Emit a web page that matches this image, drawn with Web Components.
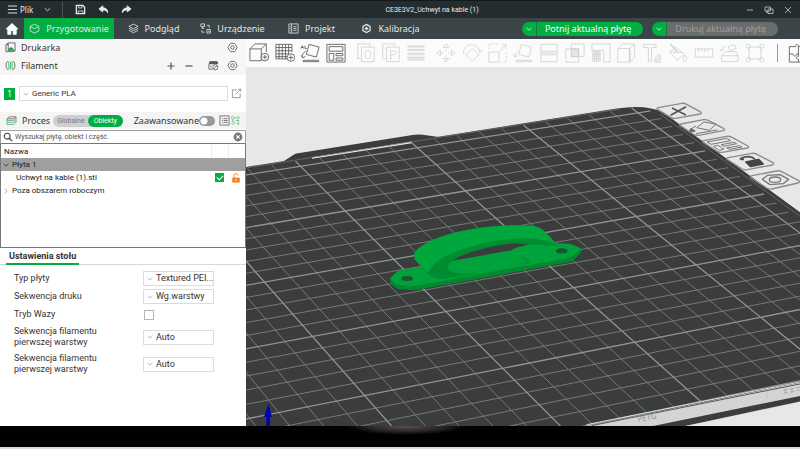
<!DOCTYPE html>
<html lang="pl">
<head>
<meta charset="utf-8">
<title>CE3E3V2_Uchwyt na kable (1)</title>
<style>
  html, body { margin: 0; height: 100%; background: #000; }
  body { font-family: "Noto Sans", "Open Sans", sans-serif; font-size: 9px; color: #333; --green: #00ae42; --compact: Roboto, "Noto Sans", sans-serif; }
</style>
</head>
<body>
<slicer-app></slicer-app>

<script>
const ICONS = {
  menu: ['0 0 12 12', '<path d="M1 2.2h10M1 6h10M1 9.8h10" stroke-width="1"/>'],
  down: ['0 0 10 10', '<path d="M2 3.6l3 2.8 3-2.8"/>'],
  right: ['0 0 10 10', '<path d="M3.6 2l2.8 3-2.8 3"/>'],
  save: ['0 0 12 12', '<path d="M1.5 1.5h7l2 2v7h-9z" stroke-width="1.4"/><path d="M4 1.5v2.8h3.6V1.5M3.4 10.5V7.6h5.2v2.9"/>'],
  undo: ['0 0 12 12', '<path d="M5.2 2L1 5.4l4.2 3.3V6.6c2.6-.2 4.3.8 5.4 3 .2-3.4-1.8-5.4-5.4-5.5z" fill="currentColor"/>'],
  redo: ['0 0 12 12', '<path d="M6.8 2L11 5.4 6.8 8.7V6.6c-2.6-.2-4.3.8-5.4 3-.2-3.4 1.8-5.4 5.4-5.5z" fill="currentColor"/>'],
  min: ['0 0 10 10', '<path d="M2 5h6"/>'],
  restore: ['0 0 10 10', '<path d="M1 2h5.5v4H1zM4 4h5v4.5H4zM2.5 6v1.5H4"/>'],
  close: ['0 0 10 10', '<path d="M2 2l6 6M8 2L2 8"/>'],
  home: ['0 0 14 14', '<path d="M7 1.5L1.2 7h1.6v5.3h3V8.6h2.400v3.700h3V7h1.600z" fill="currentColor" stroke-linejoin="round"/>'],
  cube: ['0 0 12 12', '<path d="M6 1.300l4.700 2.400v4.900L6 11 1.300 8.600V3.700zM1.500 3.900L6 6.300l4.500-2.400"/>'],
  layers: ['0 0 12 12', '<path d="M6 1.200l5 2.500-5 2.500-5-2.500zM1 5.800l5 2.500 5-2.500M1 8l5 2.600L11 8"/>'],
  device: ['0 0 12 12', '<path d="M1 1h4v3H1zM3 4v1.800M1.800 5.800h2.500M7.500 7h3.800v4H7.500zM8.500 9h2M7.500 2.500h2.500v2.500M2 8v2h3"/>'],
  project: ['0 0 12 12', '<path d="M1 1h10v10H1zM4 1.200v9.600M5.800 4h3.500M5.800 6h3.500M5.800 8h3.500M2 4h1M2 6h1M2 8h1"/>'],
  gear: ['0 0 12 12', '<path d="M4 1.500h4l1 1 2 3.500-2 3.500-1 1H4l-1-1L1 6l2-3.500z"/><circle cx="6" cy="6" r="1.900"/>'],
  calib: ['0 0 12 12', '<path d="M6 1.500l3.900 2.200v4.600L6 10.500 2.100 8.300V3.700z" stroke-width="1.300"/><path d="M6 4v4M4 6h4" stroke-width="1.600"/>'],
  printer: ['0 0 12 12', '<path d="M3.500 1h7.500v8.500H3.500zM3.500 1L1 3v7.500h7.500l2.500-1M1 3h2.500"/><path d="M3.500 8l3-2 2.500 1.500v1H3.500z" fill="#00ae42" stroke="#00ae42"/>'],
  spool: ['0 0 12 12', '<path d="M3.500 1.500c-1.500 0-2.300 2-2.300 4.500s.8 4.500 2.300 4.500M8.500 1.500c1.500 0 2.300 2 2.300 4.500s-.8 4.500-2.300 4.500"/><path d="M4.200 1.500v9M6 2v8M7.800 1.500v9" stroke="#5fc386" stroke-width="1.200"/>'],
  plus: ['0 0 10 10', '<path d="M5 1.500v7M1.500 5h7" stroke-width="1.200"/>'],
  minus: ['0 0 10 10', '<path d="M1.500 5h7" stroke-width="1.200"/>'],
  ams: ['0 0 12 12', '<path d="M2 4V2h8v2M1 4h10M1 4v6h4M3 6v2"/><path d="M2 2h8v2H2z" fill="currentColor"/><circle cx="8" cy="8" r="2.800"/><path d="M6.500 9.500l3-3"/>'],
  edit: ['0 0 12 12', '<path d="M6.500 2H1.500v8.500H10V6M5 7l5.500-5.500M8 1.300h2.700V4"/>'],
  process: ['0 0 12 12', '<path d="M3.500 2h7.500l-2.500 2.200H1z"/><path d="M1 6h7.500L11 4M1 8h7.500L11 6M1 10.300h7.500L11 8M1 4.200v6M11 2v6" stroke="#5fae80"/>'],
  list: ['0 0 12 12', '<path d="M1 1h10v10H1z"/><path d="M3 4h1M3 6h1M3 8h1M5 4h4.500M5 6h4.500M5 8h4.500"/>'],
  tune: ['0 0 12 12', '<circle cx="3" cy="3" r="1.500"/><circle cx="9" cy="3" r="1.300"/><circle cx="3.500" cy="8.500" r="1.500"/><path d="M4.500 3h3M3 4.500v2.500M6 6h4M9 6v3.500h-2M9.500 8.500v2.500"/>'],
  search: ['0 0 12 12', '<circle cx="5" cy="5" r="3.500" stroke-width="1.300"/><path d="M7.500 7.500l3.500 3.500" stroke-width="1.500"/>'],
  clear: ['0 0 12 12', '<circle cx="6" cy="6" r="5.300" fill="#777" stroke="none"/><path d="M4 4l4 4M8 4l-4 4" stroke="#fff" stroke-width="1.300"/>'],
  lock: ['0 0 10 12', '<path d="M2.500 6V3.200a2.200 2.200 0 0 1 4.400-.4" stroke-width="1.200"/><path d="M1 6h8v5H1z" fill="currentColor"/><circle cx="5" cy="8.400" r="1" fill="#fff" stroke="none"/>'],
  addCube: ['0 0 22 22', '<path d="M1 6.500h12.500v13H1zM1 6.500L6.500 1H19l-5.500 5.500M19 1v9"/><circle cx="17.500" cy="15.500" r="4.200" fill="#fafafa"/><path d="M17.500 13v5M15 15.500h5"/>'],
  addPlate: ['0 0 22 22', '<path d="M1 1.500h17.500V10M1 1.500v16h13M4.500 1.500v16M8 1.500v16M11.500 1.500v16M15 1.500v11M1 5h17.500M1 8.500h17.500M1 12h14M1 15h13"/><circle cx="17.500" cy="16" r="4.200" fill="#fafafa"/><path d="M17.500 13.500v5M15 16h5"/>'],
  orient: ['0 0 22 22', '<path d="M10 1.500l11 3-3 11-11-3zM3.500 19h17v1.500h-17zM1 6l1.500-3L4 6M5.500 3v3h2M1.500 5h2"/><path d="M7 9c-3 1-5 3-4 7M1 13.500l2 2.800 3-1.500"/>'],
  arrange: ['0 0 22 22', '<path d="M1 1.500h20v19.500H1zM3.500 4h15v5h-15zM3.500 11.500h5v7.500h-5zM11 11.500h7.500v2.500H11zM11 16.500h7.500v2.500H11z"/>'],
  copyO: ['0 0 22 22', '<path d="M15 4V1H2v16h3M6 4.500h14v16H6z"/><ellipse cx="13" cy="12.500" rx="3" ry="4.500"/>'],
  copyP: ['0 0 22 22', '<path d="M15 4V1H2v16h3M6 4.500h14v16H6zM10.500 17.500V8.500h3.500c3 0 3 4.500 0 4.500h-3.500M9 17.500h3.500"/>'],
  lines: ['0 0 22 22', '<path d="M2 3h18v1.500H2zM2 7h18v1.500H2zM2 11h18v2H2zM2 15.500h18v3.500H2z" fill="currentColor" fill-opacity=".5" stroke-width=".6"/>'],
  move: ['0 0 22 22', '<path d="M11 1l3 4H8zM11 21l3-4H8zM1 11l4-3v6zM21 11l-4-3v6z"/><path d="M11 6.500v2M11 13.500v2M6.500 11h2M13.500 11h2"/>'],
  rotate: ['0 0 22 22', '<path d="M11.500 6l7 7-7 7-7-7zM2 12C1 6 5 2 10.500 2c5 0 8.500 3 9.500 8M18 8l2 2.500 2-3"/>'],
  scale: ['0 0 22 22', '<path d="M1 10h11v11H1z"/><path d="M1 7V1h11M20 11v10h-5" stroke-dasharray="2 1.500"/><path d="M13 9l7-7M15.500 2H20v4.500"/>'],
  lay: ['0 0 22 22', '<path d="M9 1.500l11.500 3-3 11-11-3zM3.500 19h17v1.500h-17z"/><path d="M6 9c-2 1-4 3-3.500 6M.5 12.500l2 2.800 2.500-1.500"/>'],
  cut: ['0 0 22 22', '<path d="M2 9V1.500h18V9zM2 13v7.500h18V13zM0 11h22"/>'],
  bool: ['0 0 22 22', '<path d="M1 6.500h14V21H1zM7 1h14v14H7z"/><path d="M7 6.500h8V15H7z" fill="currentColor" fill-opacity=".5"/>'],
  support: ['0 0 22 22', '<path d="M1 1h20v20h-7V8H1z"/><path d="M2 9.500h8V20H2zM4 9.500V20M6 9.500V20M8 9.500V20M2 12h8M2 14.500h8M2 17h8"/>'],
  seam: ['0 0 22 22', '<path d="M2 6h13v15H2zM2 6l5-5h13.500L15 6M20.500 1v14.500L15 21"/><path d="M15 6v15" stroke-width="1.600"/>'],
  text: ['0 0 22 22', '<path d="M1.500 1.500h14v3.500H10.500v15H7V5H1.500z"/><path d="M14 21c0-5 2-8 6-8v8zM14.500 20l5-6M16 21l4-5"/>'],
  paint: ['0 0 22 22', '<path d="M8.500 4.500l9.500 8-8 6.500-8.500-9zM1.500 10l15 .5"/><path d="M2.500 1l8 8.500" stroke-width="1.600"/><path d="M19 13.500c2 3 2 6.500-.5 6.500s-2.500-3.500.5-6.500z"/>'],
  measure: ['0 0 22 22', '<path d="M1.500 6.500h19v9h-19zM5 6.500v4M8.500 6.500v3M12 6.500v4M15.500 6.500v3"/>'],
  assemble: ['0 0 22 22', '<path d="M3 14h18v6.500H3zM3 14l4-4.500h12l2 4.500M10 4l7-2.500 2 4.500-7 2.500z"/><path d="M8 3C5 4 3 5.500 3 8.500M1 6.500l2 2.500 2.500-2"/>'],
  bbox: ['0 0 22 22', '<path d="M4.500 4.500h13v13h-13z"/><circle cx="3.500" cy="3.500" r="2.300"/><circle cx="18.500" cy="3.500" r="2.300"/><circle cx="3.500" cy="18.500" r="2.300"/><circle cx="18.500" cy="18.500" r="2.300"/>'],
  puzzle: ['0 0 22 22', '<path d="M1.500 4h7c-1.500-3 4-3 3 0h8v7h-3c-3-1-3 4 0 3h3v7h-18zM1.500 12h4c0 3 4 3 4 0h2V4M11.500 12v2.500c-3 0-3 3.500 0 3.500v3"/>'],
};

const sheet = css => `<style>:host{box-sizing:border-box} *{box-sizing:border-box} button,input,select{font:inherit;color:inherit;margin:0} button{background:none;border:0;padding:0} ${css}</style>`;

function define(name, css, html, setup) {
  const template = document.createElement('template');
  template.innerHTML = sheet(css) + html;
  customElements.define(name, class extends HTMLElement {
    constructor() {
      super();
      this.attachShadow({ mode: 'open' }).append(template.content.cloneNode(true));
    }
    connectedCallback() {
      if (setup && !this.ready) { this.ready = true; setup.call(this, this.shadowRoot); }
    }
  });
}

define('ui-icon',
  `:host{display:block;flex:none;width:var(--size,12px);height:var(--size,12px)}
   svg{display:block;width:100%;height:100%;fill:none;stroke:currentColor;stroke-width:var(--line,.9)}`,
  `<svg aria-hidden="true"></svg>`,
  function (root) {
    const icon = ICONS[this.getAttribute('name')];
    if (!icon) return;
    const svg = root.querySelector('svg');
    svg.setAttribute('viewBox', icon[0]);
    svg.innerHTML = icon[1];
  });

define('title-bar',
  `:host{display:grid;grid-template-columns:1fr auto 1fr;align-items:center;height:18px;background:#252c2f;color:#e8eaea;
     border-top:1px solid #12181a;font-size:8px;line-height:16px}
   .left,.right{display:flex;align-items:center}
   .left{padding-left:7px}
   .file{display:flex;align-items:center;gap:2px}
   .down{margin-left:10px;--size:9px}
   i{width:1px;height:16px;background:#4b5356;margin:0 12px 0 10px}
   .tools{display:flex;gap:12px;--size:11px}
   .right{justify-content:flex-end;gap:9px;padding-right:7px;--size:10px;color:#b5babb}
   h1{font:inherit;font-family:var(--compact);font-size:7px;margin:0;padding-left:64px}`,
  `<div class="left"><button class="file"><ui-icon name="menu" style="--size:11px"></ui-icon>Plik</button>
     <button class="down" aria-label="Rozwiń"><ui-icon name="down"></ui-icon></button><i></i>
     <div class="tools"><button aria-label="Zapisz"><ui-icon name="save"></ui-icon></button>
     <button aria-label="Cofnij"><ui-icon name="undo"></ui-icon></button>
     <button aria-label="Ponów"><ui-icon name="redo"></ui-icon></button></div></div>
   <h1>CE3E3V2_Uchwyt na kable (1)</h1>
   <div class="right"><button aria-label="Minimalizuj"><ui-icon name="min"></ui-icon></button>
     <button aria-label="Przywróć"><ui-icon name="restore"></ui-icon></button>
     <button aria-label="Zamknij"><ui-icon name="close"></ui-icon></button></div>`);

define('nav-tab',
  `:host{display:block;width:79px}
   :host([active]){width:90px;background:var(--green)}
   button{display:flex;align-items:center;justify-content:center;gap:6px;width:100%;height:100%;white-space:nowrap}
   ui-icon{--size:11px}`,
  `<button><slot></slot></button>`,
  function (root) {
    const icon = document.createElement('ui-icon');
    icon.setAttribute('name', this.getAttribute('icon'));
    root.querySelector('button').prepend(icon);
  });

define('split-button',
  `:host{display:flex;height:14px;border-radius:7px;overflow:hidden;color:#fff;white-space:nowrap}
   button{background:var(--green)}
   .more{width:15px;display:grid;place-items:center;border-right:1px solid #2d6b46;--size:8px}
   .main{padding:0 12px 0 8px;line-height:14px}
   :host([muted]) .main{background:#6b6d6d;color:#9c9e9e}`,
  `<button class="more" aria-label="Więcej"><ui-icon name="down"></ui-icon></button><button class="main"><slot></slot></button>`);

define('nav-bar',
  `:host{display:flex;align-items:stretch;height:21px;background:#3b4446;color:#e4e6e6}
   .home{width:24px;display:grid;place-items:center;--size:14px;color:#fff}
   .actions{margin-left:auto;display:flex;align-items:center;gap:9px;padding-right:22px}`,
  `<button class="home" aria-label="Start"><ui-icon name="home"></ui-icon></button>
   <nav-tab icon="cube" active>Przygotowanie</nav-tab><nav-tab icon="layers">Podgląd</nav-tab>
   <nav-tab icon="device">Urządzenie</nav-tab><nav-tab icon="project">Projekt</nav-tab><nav-tab icon="calib">Kalibracja</nav-tab>
   <div class="actions"><split-button>Potnij aktualną płytę</split-button><split-button muted>Drukuj aktualną płytę</split-button></div>`);

define('section-head',
  `:host{display:flex;align-items:center;gap:5px;height:18px;padding:0 8px 0 5px;background:#f6f6f6;--size:11px;color:#555}
   ::slotted(h2){font:inherit;margin:0 auto 0 0;color:#333}`,
  `<slot></slot>`);

define('drop-down',
  `:host{display:grid;align-items:center;height:15px;min-width:0}
   select,ui-icon{grid-area:1/1}
   ui-icon{--size:8px;margin-left:3px;color:#999;pointer-events:none;z-index:1}
   select{appearance:none;width:100%;height:15px;padding:0 0 0 12px;border:1px solid #dcdcdc;border-radius:0;background:#fff;color:#333;line-height:13px}`,
  `<ui-icon name="down"></ui-icon><select><option></option></select>`,
  function (root) {
    root.querySelector('option').textContent = this.getAttribute('value');
    root.querySelector('select').setAttribute('aria-label', this.getAttribute('label'));
  });

define('setting-row',
  `:host{display:grid;grid-template-columns:129px 71px;align-items:center;min-height:15px;font-family:var(--compact)}
   label{line-height:11px;padding:1px 0;max-width:100px}
   .wrap{display:grid;align-items:center}
   .wrap>*{grid-area:1/1}
   ui-icon{--size:8px;margin-left:3px;color:#999;pointer-events:none;z-index:1}
   select{appearance:none;width:100%;height:15px;padding:0 0 0 12px;border:1px solid #dcdcdc;border-radius:0;background:#fff;color:#333;line-height:13px}
   input{appearance:none;width:10px;height:10px;border:1px solid #b5b5b5;background:#fff;margin-left:1px}`,
  `<label for="control"><slot></slot></label><div class="wrap"></div>`,
  function (root) {
    const value = this.getAttribute('value');
    root.querySelector('.wrap').innerHTML = value
      ? `<ui-icon name="down"></ui-icon><select id="control"><option>${value}</option></select>`
      : `<input id="control" type="checkbox">`;
  });

define('process-head',
  `:host{display:flex;align-items:center;height:17px;padding:0 5px 0 6px;background:#f4f4f4;margin-top:11px;--size:11px;color:#666}
   h2{font:inherit;color:#333;margin:0 3px 0 5px}
   .switch{display:flex;border-radius:6px;background:#cfcfcf;height:12px;line-height:12px;font-size:7px;font-family:var(--compact);color:#777}
   .switch button{padding:0 3px 0 4px}
   .switch .on{background:var(--green);color:#fff;border-radius:6px;padding:0 6px}
   label{margin-left:auto;color:#333;display:flex;align-items:center}
   input{appearance:none;width:16px;height:10px;border-radius:5px;margin:0 4px 0 0;background:radial-gradient(circle at 5px 5px,#fff 3px,#999 4px)}
   .b{color:#6fc792}`,
  `<ui-icon name="process"></ui-icon><h2>Proces</h2>
   <div class="switch"><button>Globalne</button><button class="on">Obiekty</button></div>
   <label>Zaawansowane<input type="checkbox" role="switch"></label>
   <button aria-label="Lista"><ui-icon name="list"></ui-icon></button><button class="b" aria-label="Parametry"><ui-icon name="tune"></ui-icon></button>`);

define('object-list',
  `:host{display:block;font-size:8px;font-family:var(--compact)}
   .search{display:flex;align-items:center;gap:2px;height:14px;margin-top:1px;padding:0 2px;border:1px solid #a0a0a0;border-bottom-color:#777;--size:10px;color:#444}
   input{flex:1;min-width:0;border:0;padding:0;outline:0;background:none;font-size:7px;height:12px}
   input::placeholder{color:#555;opacity:1}
   .box{height:104px;border:1px solid #777;border-top:0;color:#222}
   table{width:100%;border-collapse:collapse;table-layout:fixed}
   th,td{padding:0;height:13px;line-height:13px;text-align:left;font-weight:400}
   th{height:14px;padding-left:3px}
   th+th{border-left:1px solid #eee}
   col.c{width:17px}
   .sel{background:#9f9f9f}
   .n{display:flex;align-items:center;gap:2px;--size:8px;padding-left:1px}
   .leaf{padding-left:15px}
   .chk{appearance:none;display:block;flex:none;width:9px;height:9px;margin:0 4px;background:var(--green);position:relative}
   .chk::after{content:"";position:absolute;left:2px;top:2px;width:5px;height:3px;border:solid #fff;border-width:0 0 1px 1px;transform:rotate(-45deg)}
   .lock{color:#f5821f;--size:10px;display:block;margin-left:3px}`,
  `<div class="search"><ui-icon name="search"></ui-icon><input type="text" aria-label="Szukaj" placeholder="Wyszukaj płytę, obiekt i część."><button aria-label="Wyczyść"><ui-icon name="clear"></ui-icon></button></div>
   <div class="box"><table><colgroup><col><col class="c"><col class="c"></colgroup>
     <tr><th>Nazwa</th><th></th><th></th></tr>
     <tr class="sel"><td colspan="3"><div class="n"><ui-icon name="down"></ui-icon>Płyta 1</div></td></tr>
     <tr><td><div class="n leaf">Uchwyt na kable (1).stl</div></td><td><input class="chk" type="checkbox" checked aria-label="Drukowalny"></td><td><button class="lock" aria-label="Blokada"><ui-icon name="lock"></ui-icon></button></td></tr>
     <tr><td colspan="3"><div class="n"><ui-icon name="right" style="color:#888"></ui-icon>Poza obszarem roboczym</div></td></tr>
   </table></div>`);

define('side-panel',
  `:host{display:block;width:246px;flex:none;background:#fff}
   .fil{display:flex;align-items:center;padding:0 4px;margin-top:11px;height:15px;--size:11px;color:#888}
   .num{width:11px;height:12px;background:var(--green);color:#fff;text-align:center;line-height:12px;font-size:8px;margin-right:4px}
   drop-down{flex:1;font-size:8px;font-family:var(--compact)}
   .fil button{margin-left:3px}
   section-head:first-of-type{height:17px}
   .tabs{display:flex;border-bottom:1px solid #d8d8d8;padding-left:6px;height:16px;margin-top:1px}
   .tabs button{font-weight:700;font-family:var(--compact);padding:0 3px;border-bottom:2px solid var(--green);margin-bottom:-1px;line-height:14px;color:#333}
   form{display:grid;gap:3px;padding:6px 14px 0}
   .tools{display:flex;align-items:center;gap:8px}`,
  `<section-head><ui-icon name="printer"></ui-icon><h2>Drukarka</h2><button aria-label="Ustawienia drukarki"><ui-icon name="gear"></ui-icon></button></section-head>
   <section-head style="height:19px"><ui-icon name="spool"></ui-icon><h2>Filament</h2>
     <div class="tools"><button aria-label="Dodaj"><ui-icon name="plus" style="--size:10px"></ui-icon></button>
     <button aria-label="Usuń"><ui-icon name="minus" style="--size:10px"></ui-icon></button>
     <button aria-label="AMS" style="margin-left:6px"><ui-icon name="ams"></ui-icon></button>
     <button aria-label="Ustawienia filamentu"><ui-icon name="gear"></ui-icon></button></div></section-head>
   <div class="fil"><span class="num">1</span><drop-down value="Generic PLA" label="Filament 1"></drop-down><button aria-label="Edytuj"><ui-icon name="edit"></ui-icon></button></div>
   <process-head></process-head>
   <object-list></object-list>
   <div class="tabs"><button>Ustawienia stołu</button></div>
   <form>
     <setting-row value="Textured PEI...">Typ płyty</setting-row>
     <setting-row value="Wg.warstwy">Sekwencja druku</setting-row>
     <setting-row>Tryb Wazy</setting-row>
     <setting-row value="Auto">Sekwencja filamentu pierwszej warstwy</setting-row>
     <setting-row value="Auto">Sekwencja filamentu pierwszej warstwy</setting-row>
   </form>`);

define('tool-bar',
  `:host{display:flex;align-items:center;height:28px;padding-left:3px;background:#fbfbfb;color:#555;--size:20px;overflow:hidden}
   div{display:flex;justify-content:space-between;flex:none}
   .a{width:97px;margin-right:10px}.b{width:70px;margin-right:10px}.c{width:329px}
   .b,.c{color:#d0d0d0}
   i{flex:none;width:1px;height:18px;background:#999;margin:0 10px 0 12px}
   button{flex:none}`,
  `<div class="a"></div><div class="b"></div><div class="c"></div><i></i><button aria-label="puzzle"><ui-icon name="puzzle"></ui-icon></button>`,
  function (root) {
    const groups = {
      a: 'addCube addPlate orient arrange', b: 'copyO copyP lines',
      c: 'move rotate scale lay cut bool support seam text paint measure assemble bbox' };
    for (const key in groups)
      root.querySelector('.' + key).innerHTML = groups[key].split(' ')
        .map(n => `<button aria-label="${n}"><ui-icon name="${n}"></ui-icon></button>`).join('');
  });

/* Projects bed millimetres onto the viewport. */
function project(x, y) {
  const u = (x - 100) / 100, v = (200 - y) / 150, w = 1 + .04 * u - .1144 * v;
  return [(249.1 * u + 128 * v + 99.3) / w, (-36.5 * u + 126.6 * v + 111) / w + 33].map(n => n.toFixed(1)).join(' ');
}

define('plate-view',
  `:host{display:block;flex:1;min-height:0;background:#e7e7e7;overflow:hidden}
   svg{display:block;width:100%;height:100%}`,
  `<svg viewBox="0 0 554 359" preserveAspectRatio="xMinYMin slice" role="img" aria-label="Płyta robocza">
    <path id="bed" fill="#3b3d3c"/>
    <g transform="translate(0 33) scale(.3333)">
      <path d="M100 192L142 165Q148 161 156 160L500 105Q515 102 530 104L600 114L560 135L160 196z" fill="#3b3d3c"/>
      <path d="M198 174L497 127" stroke="#f2f2f2" stroke-width="5"/>
    </g>
    <path id="thin" stroke="#7d7f7e" stroke-width=".9" fill="none"/>
    <path id="bold" stroke="#929493" stroke-width="1.300" fill="none"/>
    <path id="rim" stroke="#777978" stroke-width=".7" fill="none"/>
    <g transform="translate(274 33) scale(.3333)">
      <path d="M200 978L840 848V905L460 990H200z" fill="#d3d5d5"/>
      <path d="M395 979L860 884V900L440 990z" fill="#3b3d3c"/>
      <path d="M440 990L860 904V1000H440z" fill="#e7e7e7"/>
      <path d="M215 977L840 852" stroke="#555" stroke-width="3"/>
      <path d="M200 974L840 846" stroke="#dcdede" stroke-width="3"/>
      <path d="M742 872v22" stroke="#bbb" stroke-width="2"/>
      <text transform="translate(354 966) rotate(-11)" fill="#8f9191" font-size="24">PETG</text>
      <g stroke="#aaa" stroke-width="3"><path d="M790 870l12-2M792 880l12-3M796 866v16M808 868l14-3M810 877l12-3M816 864v14M828 864l14-3M830 872l12-3"/></g>
      <g fill="none" stroke="#8a8c8c" stroke-width="4" stroke-linejoin="round">
        <path d="M415 23L486 10Q494 9 500 13L540 35Q548 40 540 42L466 55Q458 56 452 52L412 28Q408 25 415 23z"/>
        <path d="M483 72L551 59Q559 58 566 62L612 86Q617 90 610 92L536 106Q528 107 521 103L480 77Q476 74 483 72z"/>
        <path d="M552 122L620 109Q628 108 636 112L684 138Q690 142 682 144L606 157Q598 158 592 154L549 127Q545 124 552 122z"/>
        <path d="M625 173L695 160Q703 159 711 163L759 188Q765 192 757 195L682 209Q674 211 667 207L622 179Q617 175 625 173z"/>
        <path d="M696 227L769 213Q777 211 785 215L836 242Q842 246 834 249L755 267Q747 268 740 264L693 234Q689 229 696 227z"/>
        <path d="M456 24L498 45M498 20L452 46" stroke="#555" stroke-width="5"/>
        <path d="M552 66L588 72L568 91L530 83zM528 78L508 90M528 101L592 90" stroke="#777" stroke-width="3"/>
        <path d="M512 86l-2 10 16-3z" fill="#666" stroke="#666" stroke-width="3"/>
        <path d="M561 126L620 115L632 122L573 133zM580 139L594 136L612 148L598 151zM604 134L642 127L650 131L612 139zM620 144L658 137L666 141L630 148z" stroke="#777" stroke-width="3"/>
        <path d="M672 178C652 180 662 172 685 170Q700 171 706 180" stroke="#555" stroke-width="5"/>
        <path d="M677 186L716 178L730 192L692 200z" fill="#444" stroke="#444"/>
        <path d="M727 238L743 226L780 224L806 238L790 251L750 254z" stroke="#777"/>
        <ellipse cx="765" cy="239" rx="17" ry="8" stroke="#777"/>
      </g>
    </g>
    <g transform="translate(124 143) scale(.3333)">
      <path d="M60 205L85 182L560 100L600 102L633 115V128L606 155L135 241L85 237L62 222z" fill="#008a30"/>
      <path d="M60 205L85 182L560 100L600 102L633 115L603 142L130 229L80 224z" fill="#00a23b"/>
      <ellipse cx="111" cy="206" rx="18" ry="8" fill="#076b2b"/><path d="M97 202Q111 194 127 203L125 212Q114 204 100 211z" fill="#2d4a38"/>
      <path d="M133 130L134 148L165 184Q185 205 215 208L330 190L480 158L560 108L540 92H430L240 120z" fill="#008c31"/>
      <path d="M250 149Q320 112 420 101Q455 100 475 104L446 111L434 116L425 124L250 154z" fill="#3b3d3c"/>
      <path d="M248 152L425 121L435 115L447 119L450 132L480 153L478 160L330 190Q250 194 236 180Q226 165 248 152z" fill="#00a23b"/>
      <path d="M475 104L566 104L603 142L480 160V153L450 132L447 119L434 115z" fill="#00a23b"/>
      <path d="M450 134L480 153L478 160L425 168L470 156z" fill="#009436"/>
      <path d="M240 118Q330 86 430 80Q500 66 566 107L540 109Q470 95 420 98Q320 108 262 142L200 170z" fill="#008c31"/>
      <path d="M133 128Q160 92 260 66Q380 40 490 47Q512 50 532 72L562 104Q510 80 430 86Q330 94 240 132Q190 155 172 188L134 148z" fill="#00a73c"/>
      <ellipse cx="575" cy="123" rx="18" ry="8" fill="#076b2b"/><path d="M561 119Q575 111 591 120L588 129Q576 121 564 128z" fill="#2d4a38"/>
    </g>
    <path d="M22.500 337L26 350H24V360H20.500V350H18z" fill="#0000b4"/>
  </svg>`,
  function (root) {
    const line = (a, b) => `M${project(...a)}L${project(...b)}`;
    let thin = '', bold = '';
    for (let i = 0; i <= 250; i += 10) {
      const d = line([i, 0], [i, 256]) + line([0, i], [256, i]);
      if (i % 50) thin += d; else bold += d;
    }
    root.querySelector('#thin').setAttribute('d', thin);
    root.querySelector('#bold').setAttribute('d', bold);
    root.querySelector('#rim').setAttribute('d', line([0, 257], [245, 257]) + line([258, 245], [258, 0]));
    root.querySelector('#bed').setAttribute('d',
      `M${project(-3, -3)}L${project(-3, 258)}L${project(244, 258)}Q${project(258, 258)} ${project(260, 246)}L${project(260, -3)}z`);
  });

define('bottom-strip',
  `:host{display:block;flex:none;height:23px;border-bottom:2px solid #d9d9d9;
     background:radial-gradient(ellipse 60px 9px at 406px 0,#5b5152,#2a2727 60%,#000 100%) #000}`, ``);

define('slicer-app',
  `:host{display:flex;flex-direction:column;height:100vh}
   main{display:flex;flex:1;min-height:0}
   .work{display:flex;flex-direction:column;flex:1;min-width:0}`,
  `<title-bar></title-bar><nav-bar></nav-bar>
   <main><side-panel></side-panel><div class="work"><tool-bar></tool-bar><plate-view></plate-view></div></main>
   <bottom-strip></bottom-strip>`);
</script>
</body>
</html>
